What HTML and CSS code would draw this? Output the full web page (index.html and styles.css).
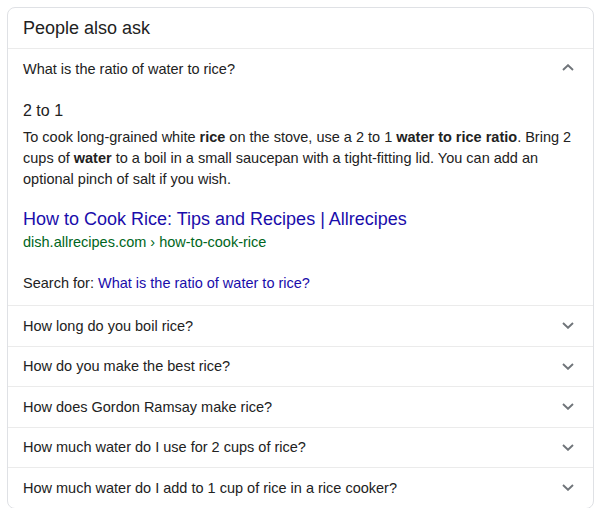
FILE: index.html
```html
<!DOCTYPE html>
<html>
<head>
<meta charset="utf-8">
<link rel="stylesheet" href="styles.css">
</head>
<body>
<div class="card">
  <div class="header">People also ask</div>
  <div class="q open">
    <span>What is the ratio of water to rice?</span>
    <svg class="chev" viewBox="0 0 12 7" width="12" height="7"><polyline points="1,6 6,1.2 11,6"/></svg>
  </div>
  <div class="answer">
    <div class="short">2 to 1</div>
    <p class="para">To cook long-grained white <b>rice</b> on the stove, use a 2 to 1 <b>water to rice ratio</b>. Bring 2 cups of <b>water</b> to a boil in a small saucepan with a tight-fitting lid. You can add an optional pinch of salt if you wish.</p>
    <a class="title" href="#">How to Cook Rice: Tips and Recipes | Allrecipes</a>
    <div class="url">dish.allrecipes.com › how-to-cook-rice</div>
    <div class="search">Search for: <a href="#">What is the ratio of water to rice?</a></div>
  </div>
  <div class="q">
    <span>How long do you boil rice?</span>
    <svg class="chev" viewBox="0 0 12 7" width="12" height="7"><polyline points="1,1 6,5.8 11,1"/></svg>
  </div>
  <div class="q">
    <span>How do you make the best rice?</span>
    <svg class="chev" viewBox="0 0 12 7" width="12" height="7"><polyline points="1,1 6,5.8 11,1"/></svg>
  </div>
  <div class="q">
    <span>How does Gordon Ramsay make rice?</span>
    <svg class="chev" viewBox="0 0 12 7" width="12" height="7"><polyline points="1,1 6,5.8 11,1"/></svg>
  </div>
  <div class="q">
    <span>How much water do I use for 2 cups of rice?</span>
    <svg class="chev" viewBox="0 0 12 7" width="12" height="7"><polyline points="1,1 6,5.8 11,1"/></svg>
  </div>
  <div class="q">
    <span>How much water do I add to 1 cup of rice in a rice cooker?</span>
    <svg class="chev" viewBox="0 0 12 7" width="12" height="7"><polyline points="1,1 6,5.8 11,1"/></svg>
  </div>
</div>
</body>
</html>
```

FILE: styles.css
```css
html, body {
  margin: 0;
  padding: 0;
  background: #fff;
}
body {
  padding: 7px 7px 0 7px;
  font-family: "Liberation Sans", Arial, sans-serif;
  color: #222;
  font-size: 14.5px;
}
.card {
  width: 587px;
  box-sizing: border-box;
  border: 1px solid #dfe1e5;
  border-radius: 8px;
  overflow: hidden;
}
.header {
  height: 40px;
  line-height: 40px;
  padding-left: 15px;
  font-size: 18px;
}
.q {
  box-sizing: border-box;
  height: 40.5px;
  border-top: 1px solid #ebebeb;
  padding: 0 19px 0 15px;
  display: flex;
  align-items: center;
  justify-content: space-between;
}
.q.open {
  height: 41px;
}
.chev {
  fill: none;
  stroke: #70757a;
  stroke-width: 1.9;
}
.open .chev {
  margin-top: -4px;
}
.answer {
  padding: 10px 15px 12px 15px;
  display: flex;
  flex-direction: column;
  align-items: flex-start;
}
.short {
  font-size: 16px;
  line-height: 24px;
}
.para {
  margin: 4px 0 0 0;
  line-height: 21px;
}
.para b {
  font-weight: bold;
}
.title {
  margin-top: 17px;
  font-size: 18px;
  line-height: 24px;
  color: #1a0dab;
  text-decoration: none;
}
.url {
  margin-top: 1px;
  line-height: 20px;
  color: #006621;
}
.search {
  margin-top: 21px;
  line-height: 20px;
}
.search a {
  color: #1a0dab;
  text-decoration: none;
}
```
